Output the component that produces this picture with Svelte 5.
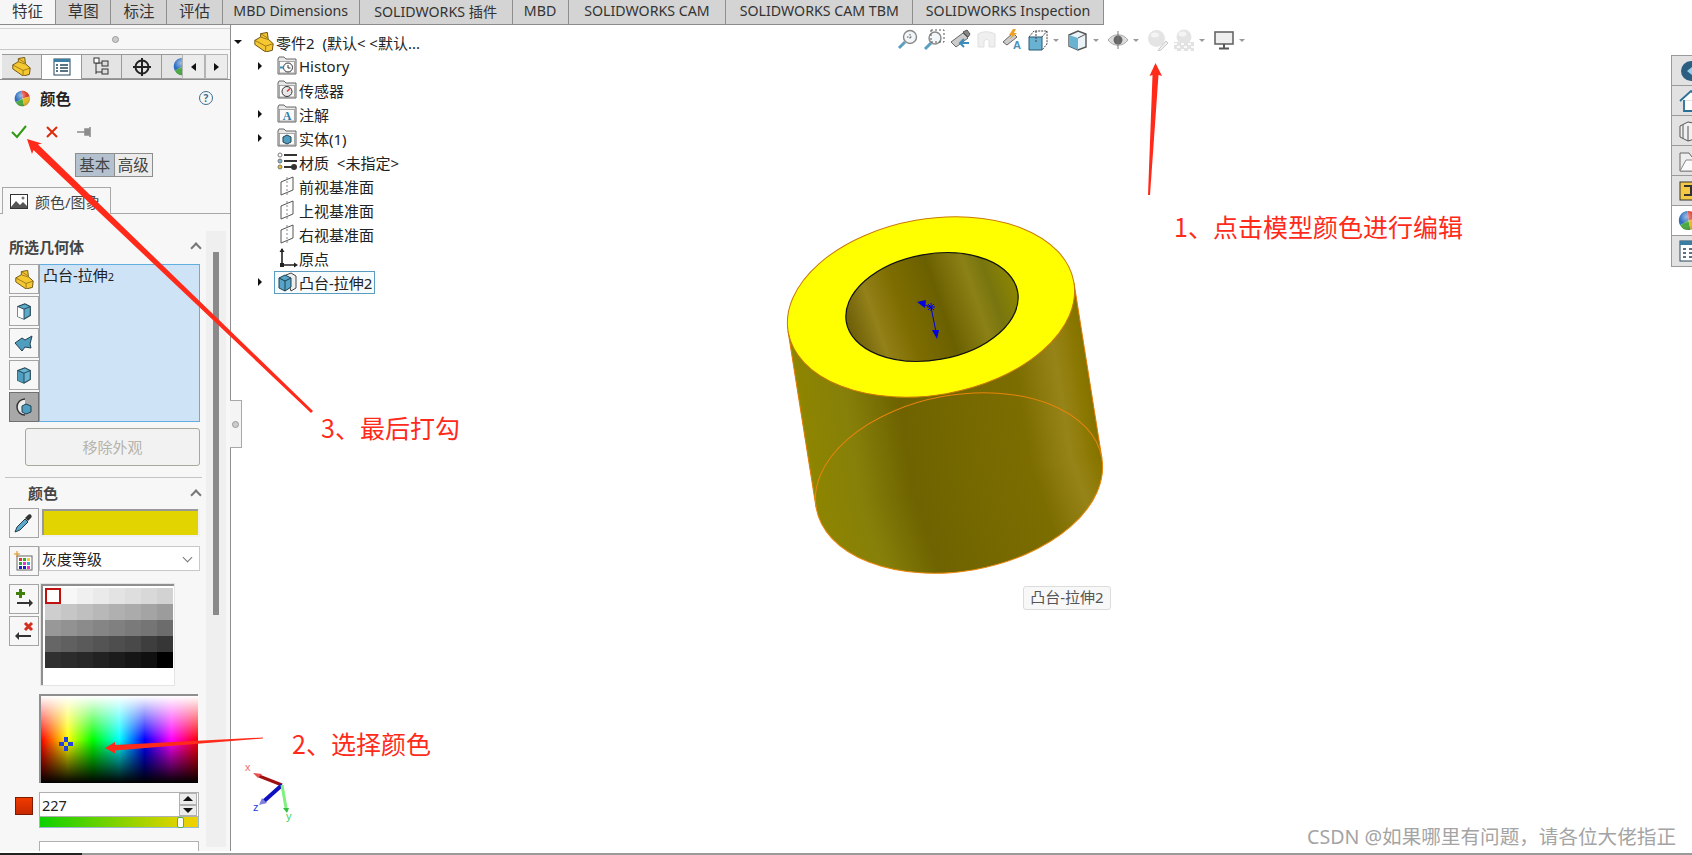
<script lang="ts">
  const topTabs = [
    { label: "特征", width: 56, active: true, cjk: true },
    { label: "草图", width: 55.5, cjk: true },
    { label: "标注", width: 56, cjk: true },
    { label: "评估", width: 55.5, cjk: true },
    { label: "MBD Dimensions", width: 137 },
    { label: "SOLIDWORKS 插件", width: 153 },
    { label: "MBD", width: 56 },
    { label: "SOLIDWORKS CAM", width: 158 },
    { label: "SOLIDWORKS CAM TBM", width: 187 },
    { label: "SOLIDWORKS Inspection", width: 191 },
  ];

  const grays = [
    "#fff", "#f7f7f7", "#f0f0f0", "#eaeaea", "#e3e3e3", "#dedede", "#d8d8d8", "#d2d2d2",
    "#cecece", "#c6c6c6", "#bfbfbf", "#b8b8b8", "#b0b0b0", "#ababab", "#a4a4a4", "#9c9c9c",
    "#989898", "#929292", "#8b8b8b", "#858585", "#808080", "#7a7a7a", "#757575", "#6c6c6c",
    "#666", "#606060", "#5a5a5a", "#545454", "#4e4e4e", "#494949", "#3e3e3e", "#363636",
    "#303030", "#2c2c2c", "#282828", "#222", "#1c1c1c", "#161616", "#101010", "#000",
  ];

  const tree = [
    { label: "History", kind: "history", arrow: true },
    { label: "传感器", kind: "sensor" },
    { label: "注解", kind: "note", arrow: true },
    { label: "实体(1)", kind: "solid", arrow: true },
    { label: "材质  <未指定>", kind: "material" },
    { label: "前视基准面", kind: "plane" },
    { label: "上视基准面", kind: "plane" },
    { label: "右视基准面", kind: "plane" },
    { label: "原点", kind: "origin" },
    { label: "凸台-拉伸2", kind: "boss", arrow: true, selected: true },
  ];
</script>

{#snippet part(size = 22)}
  <svg width={size} height={size} viewBox="0 0 24 24">
    <path d="M1 10l7-4V2l8-1.500 1 8 6 5.500-1 8-8 2L1 15z" fill="#f5c831" stroke="#6e5414" stroke-width="1.200" />
    <path d="M1 10l13 7v7M14 17l9-3M8 6l9 3M8 2l8 5" fill="none" stroke="#8a6a14" stroke-width="1" />
  </svg>
{/snippet}

{#snippet ball(size = 18)}
  <svg width={size} height={size} viewBox="0 0 20 20">
    <path d="M10 10L9 1a9 9 0 0 1 9.500 6.500z" fill="#d8382a" />
    <path d="M10 10L9 1a9 9 0 0 0-7 13.500z" fill="#2a6cc0" />
    <path d="M10 10L2 14.500a9 9 0 0 0 10 4.300z" fill="#45a83a" />
    <path d="M10 10l2 8.800a9 9 0 0 0 6.500-11.300z" fill="#e9b820" />
    <circle cx="10" cy="10" r="9" fill="url(#ballShade)" />
  </svg>
{/snippet}

{#snippet cube(size = 18, side = "#4f9dbf", front = "#69b4d2")}
  <svg width={size} height={size} viewBox="0 0 20 20">
    <path d="M3 5l8-3 6 3v10l-7 4-7-3z" fill={front} stroke="#20404f" stroke-width="1.200" />
    <path d="M3 5l7 3v11l-7-3z" fill={side} />
    <path d="M3 5l7 3 7-3M10 8v11" fill="none" stroke="#20404f" stroke-width="1" />
  </svg>
{/snippet}

{#snippet treeIcon(kind: string)}
  {#if kind === "plane"}
    <svg width="20" height="20" viewBox="0 0 20 20">
      <path d="M4 6l12-5v13L4 19z" fill="none" stroke="#555" stroke-width="1" />
      <path d="M10 1v18" stroke="#888" stroke-dasharray="2 2" />
    </svg>
  {:else if kind === "origin"}
    <svg width="22" height="20" viewBox="0 0 22 20">
      <path d="M5 1v16h14" fill="none" stroke="#222" stroke-width="1.600" />
      <path d="M2.500 4L5 0l2.500 4zM17 14.500l4 2.500-4 2.500z" fill="#222" />
      <rect x="3" y="15" width="4" height="4" fill="#222" />
    </svg>
  {:else if kind === "material"}
    <svg width="22" height="20" viewBox="0 0 22 20">
      <circle cx="3" cy="3" r="2" fill="#fff" stroke="#777" />
      <circle cx="3" cy="9" r="2" fill="#7db6d8" stroke="#777" />
      <circle cx="3" cy="15" r="2" fill="#f0c020" stroke="#777" />
      <path d="M7 3h13M7 9h13M7 15h8" stroke="#333" stroke-width="1.800" />
      <circle cx="17" cy="15" r="3" fill="#333" />
    </svg>
  {:else if kind === "boss"}
    <svg width="22" height="20" viewBox="0 0 22 20">
      <path d="M9 3l5-2 5 3v12l-5 3z" fill="#eee" stroke="#444" />
      <path d="M2 6l6-3 6 3v9l-6 4-6-3z" fill="#56a5c8" stroke="#1f3f50" />
      <path d="M2 6l6 3 6-3M8 9v10" fill="none" stroke="#1f3f50" />
    </svg>
  {:else}
    <svg width="20" height="20" viewBox="0 0 20 20">
      <path d="M1 3l1-2h5l2 2h10v15H1z" fill="#e8e8e8" stroke="#666" />
      <rect x="2.500" y="5.500" width="15" height="11.500" fill="#fafafa" stroke="#888" stroke-width=".7" />
      {#if kind === "history"}
        <circle cx="11" cy="11.500" r="4.500" fill="#fff" stroke="#333" />
        <path d="M11 9v3h2.500" fill="none" stroke="#333" />
        <path d="M3 11.500h4" stroke="#3a8db5" stroke-width="2" />
      {:else if kind === "sensor"}
        <circle cx="10" cy="11.500" r="5" fill="#e8e8e8" stroke="#333" />
        <path d="M10 11.500l3-3" stroke="#d33" stroke-width="1.500" />
      {:else if kind === "note"}
        <text x="10" y="16" font-size="12" font-weight="700" text-anchor="middle" fill="#2f7ba8" font-family="Liberation Serif, serif">A</text>
      {:else}
        <path d="M6 9l4-2 4 2v5l-4 2-4-2z" fill="#4f9dbf" stroke="#20404f" />
      {/if}
    </svg>
  {/if}
{/snippet}

<div class="app">
  <nav class="tabbar">
    {#each topTabs as tab}
      <div class="toptab" class:active={tab.active} class:cjk={tab.cjk} style={`width: ${tab.width}px`}>{tab.label}</div>
    {/each}
  </nav>

  <div class="workspace">
    <aside class="panel">
      <div class="grip"><span class="dot"></span></div>

      <div class="ptabs">
        <div class="ptab">{@render part(19)}</div>
        <div class="ptab on">
          <svg width="18" height="18" viewBox="0 0 18 18">
            <rect x="1" y="1" width="16" height="16" fill="#fff" stroke="#24465c" />
            <rect x="1" y="1" width="16" height="3" fill="#3a7ea3" />
            <path d="M3 7h2M7 7h8M3 10h2M7 10h8M3 13h2M7 13h8" stroke="#24465c" stroke-width="1.400" />
          </svg>
        </div>
        <div class="ptab">
          <svg width="18" height="20" viewBox="0 0 18 20">
            <path d="M3 2v15M3 6h6M3 15h6" stroke="#333" fill="none" />
            <rect x="1" y="1" width="5" height="5" fill="#fff" stroke="#333" />
            <rect x="9" y="4" width="6" height="5" fill="#ddd" stroke="#333" />
            <rect x="9" y="12" width="6" height="5" fill="#ddd" stroke="#333" />
          </svg>
        </div>
        <div class="ptab">
          <svg width="20" height="20" viewBox="0 0 20 20">
            <circle cx="10" cy="10" r="6.500" fill="none" stroke="#222" stroke-width="2" />
            <path d="M10 1v18M1 10h18" stroke="#222" stroke-width="2" />
          </svg>
        </div>
        <div class="ptab clip">{@render ball(19)}</div>
        <div class="pnav"><i class="tri left"></i></div>
        <div class="pnav"><i class="tri right"></i></div>
      </div>

      <div class="title">
        <span class="ball">{@render ball(17)}</span>
        <strong>颜色</strong>
        <span class="help">?</span>
      </div>

      <div class="actions">
        <svg width="16" height="14" viewBox="0 0 16 14"><path d="M1 7l5 5 9-11" fill="none" stroke="#2f9a12" stroke-width="2" /></svg>
        <svg class="cross" width="14" height="14" viewBox="0 0 14 14"><path d="M2 2l10 10M12 2L2 12" stroke="#dc2a0a" stroke-width="2" /></svg>
        <svg class="pin" width="16" height="12" viewBox="0 0 16 12"><path d="M0 6h8M8 3h5v6H8zM13 1v10" stroke="#8d8d8d" stroke-width="1.600" fill="#8d8d8d" /></svg>
      </div>

      <div class="mode">
        <span class="on">基本</span><span>高级</span>
      </div>

      <div class="subtab-row">
        <div class="subtab">
          <svg width="18" height="15" viewBox="0 0 18 15">
            <rect x=".5" y=".5" width="17" height="14" fill="#fff" stroke="#333" />
            <path d="M1 13l5-6 4 4 3-3 4 4v2H1z" fill="#555" />
            <circle cx="13" cy="4" r="1.500" fill="#777" />
          </svg>
          颜色/图象
        </div>
      </div>

      <div class="scrollarea">
        <div class="content">
          <div class="section-head first"><b>所选几何体</b><i class="chev"></i></div>
          <div class="geometry">
            <div class="side">
              <button class="ico">{@render part(19)}</button>
              <button class="ico">{@render cube(18, "#ffffff", "#5ca9ca")}</button>
              <button class="ico">
                <svg width="20" height="20" viewBox="0 0 20 20"><path d="M1 10l7-5 3 2 7-4-2 8 1 4-6-1-3 4z" fill="#4f9dbf" stroke="#20404f" /></svg>
              </button>
              <button class="ico">{@render cube(18)}</button>
              <button class="ico pressed">
                <svg width="20" height="20" viewBox="0 0 20 20">
                  <path d="M11 2a8 8 0 1 0 0 16" fill="#eee" stroke="#333" stroke-width="1.500" />
                  <path d="M8 9l4-2 5 2v6l-5 2-4-2z" fill="#4f9dbf" stroke="#20404f" />
                </svg>
              </button>
            </div>
            <div class="listbox">凸台-拉伸<small>2</small></div>
          </div>

          <button class="remove">移除外观</button>

          <div class="section-head color"><b>颜色</b><i class="chev"></i></div>

          <div class="row pick">
            <button class="ico">
              <svg width="20" height="20" viewBox="0 0 20 20">
                <path d="M1 19l2-5 8-8 3 3-8 8z" fill="#5ca9ca" stroke="#1f3f50" />
                <path d="M11 5l3-3c2-2 5 1 3 3l-3 3z" fill="#333" />
              </svg>
            </button>
            <div class="swatch"></div>
          </div>

          <div class="row scale">
            <button class="ico">
              <svg width="20" height="20" viewBox="0 0 20 20">
                <rect x="3" y="5" width="15" height="14" fill="#fff" stroke="#666" />
                <rect x="5" y="7" width="3" height="3" fill="#d33" /><rect x="9" y="7" width="3" height="3" fill="#3a3" /><rect x="13" y="7" width="3" height="3" fill="#ec3" />
                <rect x="5" y="11" width="3" height="3" fill="#3a3" /><rect x="9" y="11" width="3" height="3" fill="#e3c" /><rect x="13" y="11" width="3" height="3" fill="#3ad" />
                <rect x="5" y="15" width="3" height="3" fill="#22c" /><rect x="9" y="15" width="3" height="3" fill="#22c" /><rect x="13" y="15" width="3" height="3" fill="#e3c" />
                <path d="M3 0v6M0 3h6" stroke="#e08a10" />
              </svg>
            </button>
            <div class="select">灰度等级<i class="chev down"></i></div>
          </div>

          <div class="row palette-row">
            <div class="side two">
              <button class="ico">
                <svg width="20" height="20" viewBox="0 0 20 20">
                  <path d="M5 0h3v3h3v3H8v3H5V6H2V3h3z" fill="#3f7f0c" />
                  <path d="M3 14h13" stroke="#333" stroke-width="2" /><path d="M15 10l4 4-4 4z" fill="#333" />
                </svg>
              </button>
              <button class="ico">
                <svg width="20" height="20" viewBox="0 0 20 20">
                  <path d="M11 2l7 7M18 2l-7 7" stroke="#d33020" stroke-width="3" />
                  <path d="M4 15h13" stroke="#333" stroke-width="2" /><path d="M5 11l-4 4 4 4z" fill="#333" />
                </svg>
              </button>
            </div>
            <div class="palette">
              <div class="cells">
                {#each grays as g, i}
                  <span class:current={i === 0} style={`background: ${g}`}></span>
                {/each}
              </div>
            </div>
          </div>

          <div class="spectrum"><span class="cross-mark"></span></div>

          <div class="value-row">
            <span class="redchip"></span>
            <div class="field">
              <div class="input">
                <span>227</span>
                <div class="spin">
                  <span class="spin-btn"><i class="tri up"></i></span>
                  <span class="spin-btn"><i class="tri dn"></i></span>
                </div>
              </div>
              <div class="slider"><span class="thumb"></span></div>
            </div>
          </div>
          <div class="value-row next"><div class="field"><div class="input"></div></div></div>
        </div>
        <div class="track"><span></span></div>
      </div>
    </aside>

    <main class="canvas">
      <div class="handle"><span class="dot"></span></div>

      <ul class="tree">
        <li class="root">
          <i class="tri dn small"></i>
          <span class="root-icon">{@render part(20)}</span>
          <span class="label">零件2  (默认&lt; &lt;默认...</span>
        </li>
        {#each tree as node}
          <li>
            <span class="twist">{#if node.arrow}<i class="tri right small"></i>{/if}</span>
            <span class="node" class:selected={node.selected}>
              <span class="node-icon">{@render treeIcon(node.kind)}</span>
              <span class="label">{node.label}</span>
            </span>
          </li>
        {/each}
      </ul>

      <div class="headsup">
        <svg width="22" height="22" viewBox="0 0 22 22">
          <circle cx="13" cy="8" r="6.500" fill="#f2f6f8" stroke="#888" stroke-width="1.400" />
          <path d="M8 13l-6 6" stroke="#5a9fc0" stroke-width="3" />
          <path d="M13 5v6M10 8h6" stroke="#555" stroke-dasharray="1.500 1.500" />
        </svg>
        <svg width="22" height="22" viewBox="0 0 22 22">
          <circle cx="12" cy="9" r="6" fill="#f2f6f8" stroke="#888" stroke-width="1.400" />
          <path d="M8 14l-6 6" stroke="#5a9fc0" stroke-width="3" />
          <rect x="8" y="1" width="13" height="12" fill="none" stroke="#555" stroke-dasharray="2 2" />
        </svg>
        <svg width="22" height="22" viewBox="0 0 22 22">
          <path d="M2 13l12-9 5 5-12 9z" fill="#ccc" stroke="#666" />
          <path d="M14 3l4-2 3 4-2 3z" fill="#888" stroke="#555" />
          <path d="M20 14h-9M15 10l-4 4 4 4" fill="none" stroke="#3c8dbb" stroke-width="2" />
        </svg>
        <svg width="22" height="22" viewBox="0 0 22 22" opacity=".45">
          <path d="M3 5c5-3 11-3 17 0v13h-6v-6c-1-2-3-2-5 0v6H3z" fill="#ddd" stroke="#bbb" />
        </svg>
        <svg width="22" height="22" viewBox="0 0 22 22">
          <path d="M2 13L12 4l4 4-10 8z" fill="#ccc" stroke="#666" />
          <path d="M12 0L8 6h3l-2 4 7-6h-3l2-4z" fill="#f0a020" />
          <text x="16" y="20" font-size="11" font-weight="700" text-anchor="middle" fill="#4a90b8" font-family="Liberation Sans, sans-serif">A</text>
        </svg>
        <span class="drop">
          <svg width="22" height="22" viewBox="0 0 22 22">
            <path d="M2 8h13v13H2z" fill="#6ab2d2" stroke="#2a5a72" />
            <path d="M2 8l5-6h13v13l-5 6M15 8l5-6M9 2v11" fill="none" stroke="#444" stroke-dasharray="2 1" />
          </svg>
          <i class="caret"></i>
        </span>
        <span class="drop">
          <svg width="22" height="22" viewBox="0 0 22 22">
            <path d="M2 6l9-4 8 3v13l-8 3-9-4z" fill="#e9f3f8" stroke="#555" stroke-width="1.400" />
            <path d="M2 6l9 3v12l-9-4z" fill="#6ab2d2" />
            <path d="M11 9l8-4" stroke="#555" />
          </svg>
          <i class="caret"></i>
        </span>
        <span class="drop">
          <svg width="22" height="22" viewBox="0 0 22 22">
            <path d="M1 11c5-7 15-7 20 0-5 7-15 7-20 0z" fill="#ddd" stroke="#aaa" />
            <circle cx="11" cy="11" r="4.500" fill="#666" />
            <path d="M11 2v18" stroke="#777" />
          </svg>
          <i class="caret"></i>
        </span>
        <span class="drop">
          <span class="twin">
            <svg width="22" height="22" viewBox="0 0 22 22">
              <circle cx="9.500" cy="9.500" r="8.500" fill="#e4e4e4" />
              <ellipse cx="8" cy="6" rx="4" ry="2.500" fill="#f4f4f4" />
              <path d="M12 20l7-8 2 2-7 7-3 1z" fill="#f0f0f0" stroke="#c9c9c9" />
            </svg>
            <svg width="22" height="22" viewBox="0 0 22 22">
              <circle cx="11" cy="8" r="7.500" fill="#e4e4e4" />
              <ellipse cx="9.500" cy="5" rx="4" ry="2.500" fill="#f4f4f4" />
              <rect x="1" y="13" width="20" height="9" fill="#e2e2e2" />
              <path d="M1 21h3M8 21h3M15 21h3M4 18h3M11 18h3M18 18h3M1 15h3M8 15h3M15 15h3" stroke="#fafafa" stroke-width="2" />
            </svg>
          </span>
          <i class="caret"></i>
        </span>
        <span class="drop">
          <svg width="22" height="22" viewBox="0 0 22 22">
            <rect x="2" y="3" width="18" height="12" fill="#eee" stroke="#666" stroke-width="1.600" />
            <path d="M11 15v4M6 19.500h10" stroke="#555" stroke-width="2" />
          </svg>
          <i class="caret"></i>
        </span>
      </div>

      <svg class="model" width="1462" height="830" viewBox="230 25 1462 830">
        <defs>
          <radialGradient id="ballShade" cx=".4" cy=".3" r=".8">
            <stop offset="0" stop-color="#fff" stop-opacity=".55" />
            <stop offset=".5" stop-color="#fff" stop-opacity="0" />
            <stop offset="1" stop-color="#000" stop-opacity=".35" />
          </radialGradient>
          <linearGradient id="sideShade" gradientUnits="userSpaceOnUse" x1="788" y1="400" x2="1101" y2="350">
            <stop offset="0" stop-color="#a89e00" />
            <stop offset=".04" stop-color="#8d8400" />
            <stop offset=".18" stop-color="#86800a" />
            <stop offset=".34" stop-color="#6e6300" />
            <stop offset=".55" stop-color="#766900" />
            <stop offset=".72" stop-color="#7c6d00" />
            <stop offset=".85" stop-color="#978419" />
            <stop offset=".92" stop-color="#8a7700" />
            <stop offset="1" stop-color="#786900" />
          </linearGradient>
          <linearGradient id="holeShade" gradientUnits="userSpaceOnUse" x1="844" y1="320" x2="1018" y2="292">
            <stop offset="0" stop-color="#6a5c08" />
            <stop offset=".17" stop-color="#938119" />
            <stop offset=".33" stop-color="#7e6d00" />
            <stop offset=".55" stop-color="#6b6000" />
            <stop offset=".75" stop-color="#8b8116" />
            <stop offset=".85" stop-color="#78750f" />
            <stop offset="1" stop-color="#8e8800" />
          </linearGradient>
        </defs>
        <ellipse cx="958" cy="483" rx="145" ry="88" transform="rotate(-10 958 483)" fill="url(#sideShade)" />
        <path d="M787 331 L815 507 L1101 459 L1073 283 Z" fill="url(#sideShade)" />
        <path d="M787 331 L815 507 M1073 283 L1101 459" fill="none" stroke="#e07a00" stroke-width="1" />
        <ellipse cx="958" cy="483" rx="145" ry="88" transform="rotate(-10 958 483)" fill="none" stroke="#e8850a" stroke-width="1" />
        <ellipse cx="930" cy="307" rx="145" ry="88" transform="rotate(-10 930 307)" fill="#ffff00" stroke="#c8780a" stroke-width="1" />
        <ellipse cx="931" cy="307" rx="87" ry="53" transform="rotate(-10 931 307)" fill="url(#holeShade)" stroke="#111" stroke-width="1.200" />
        <g stroke="#0000e0" fill="#0000e0" stroke-width="1">
          <path d="M930 307 L935 332 M930 307 L921 304" fill="none" />
          <path d="M925 300l-9 2 8 6zM931 330l7 0-2 9z" stroke="none" />
          <path d="M926 307h8M930 303v8M927 304l6 6M933 304l-6 6" fill="none" />
        </g>
        <g stroke-width="3">
          <path d="M281 785L258 776" stroke="#a01010" />
          <path d="M252 773l9 1-4 4z" fill="#e85050" />
          <path d="M281 785L262 802" stroke="#1010c0" stroke-width="4" />
          <path d="M258 805l3-7 5 5z" fill="#8080e0" />
          <path d="M281 785L285 808" stroke="#80f080" />
          <path d="M282 808h6l-2 5z" fill="#30c040" />
        </g>
        <text x="244" y="771" class="axis" fill="#f07070">x</text>
        <text x="252" y="811" class="axis" fill="#2040e0">z</text>
        <text x="285" y="820" class="axis" fill="#40d060">y</text>
      </svg>

      <div class="tooltip">凸台-拉伸2</div>

      <div class="rail">
        <div class="rail-btn">
          <svg width="26" height="22" viewBox="0 0 26 22"><circle cx="13" cy="11" r="10" fill="#2a5f82" /><path d="M9 11l5-4v8z" fill="#9fd0ea" /></svg>
        </div>
        <div class="rail-btn">
          <svg width="26" height="22" viewBox="0 0 26 22"><path d="M2 11L13 1l11 10M6 10v11h14V10" fill="#fff" stroke="#2a6f95" stroke-width="1.800" /></svg>
        </div>
        <div class="rail-btn">
          <svg width="26" height="22" viewBox="0 0 26 22"><path d="M2 6l8-4 10 2v14l-10 3-8-4zM10 6v15M5 5v13" fill="#f0f0f0" stroke="#555" /></svg>
        </div>
        <div class="rail-btn">
          <svg width="26" height="22" viewBox="0 0 26 22"><path d="M2 3h9l3 4h12v14H2z" fill="#eee" stroke="#666" /><path d="M2 21l6-11h18v11z" fill="#fafafa" stroke="#888" /></svg>
        </div>
        <div class="rail-btn">
          <svg width="26" height="22" viewBox="0 0 26 22"><rect x="2" y="2" width="24" height="18" fill="#f4c842" stroke="#333" /><path d="M6 6h14M13 6v9M6 15h14" stroke="#333" stroke-width="2" /></svg>
        </div>
        <div class="rail-btn on">{@render ball(21)}</div>
        <div class="rail-btn">
          <svg width="26" height="22" viewBox="0 0 26 22"><rect x="2" y="1" width="24" height="20" fill="#fff" stroke="#24465c" /><rect x="2" y="1" width="24" height="4" fill="#3a7ea3" /><path d="M5 9h3M11 9h12M5 13h3M11 13h12M5 17h3M11 17h12" stroke="#24465c" stroke-width="1.500" /></svg>
        </div>
      </div>

      <div class="note note-1">1、点击模型颜色进行编辑</div>
      <div class="note note-2">2、选择颜色</div>
      <div class="note note-3">3、最后打勾</div>
      <div class="watermark">CSDN @如果哪里有问题，请各位大佬指正</div>
    </main>

    <svg class="arrows" width="1692" height="855" viewBox="0 0 1692 855">
      <path d="M1148 195 L1152.500 75 L1149.500 76 L1155.500 63 L1162 76 L1158.500 75 L1150 195 Z" fill="#ff2a1a" />
      <path d="M263 737.500 L115 745 L115 742 L105 748 L115 753.500 L115 750.500 L263 738.500 Z" fill="#ff2a1a" />
      <path d="M313 411 L38 144.500 L42 143.500 L27 139 L32 154 L33.500 150 L311 413 Z" fill="#ff2a1a" />
    </svg>
  </div>

  <div class="statusbar"><span></span></div>
</div>

<style>
  :global(body) {
    margin: 0;
    background: #fff;
  }

  .app {
    position: relative;
    width: 1692px;
    height: 855px;
    overflow: hidden;
    font-family: "Noto Sans", "Noto Sans CJK SC", sans-serif;
    color: #222;
    font-size: 15px;
  }

  .tabbar {
    display: flex;
    width: 1104px;
    height: 24px;
    background: #d4d4d4;
    border-bottom: 1px solid #8a8a8a;
  }

  .toptab {
    box-sizing: border-box;
    display: flex;
    align-items: center;
    justify-content: center;
    height: 24px;
    padding-bottom: 3px;
    border-right: 1px solid #8e8e8e;
    font-size: 14.200px;
    color: #333;
    white-space: nowrap;
  }

  .toptab.cjk {
    font-size: 15.500px;
  }

  .toptab.active {
    background: #f6f6f6;
  }

  .workspace {
    display: flex;
    height: 826px;
  }

  .panel {
    box-sizing: border-box;
    flex: 0 0 231px;
    height: 826px;
    background: #f7f7f7;
    border-right: 1px solid #8f8f8f;
    overflow: hidden;
  }

  .grip {
    display: flex;
    justify-content: center;
    align-items: center;
    height: 20px;
    margin-top: 3px;
    border-top: 1px solid #d4d4d4;
    border-bottom: 1px solid #c8c8c8;
  }

  .dot {
    display: block;
    width: 5px;
    height: 5px;
    border-radius: 50%;
    background: #ccc;
    border: 1px solid #999;
  }

  .ptabs {
    display: flex;
    height: 25px;
    margin-top: 4px;
    padding-left: 2px;
    border-bottom: 1px solid #8f8f8f;
    overflow: hidden;
  }

  .ptab {
    box-sizing: border-box;
    display: flex;
    align-items: center;
    justify-content: center;
    width: 40px;
    background: #e4e4e4;
    border: 1px solid #9a9a9a;
    border-left: 0;
  }

  .ptab.on {
    background: #fff;
    height: 26px;
  }

  .ptab.clip {
    width: 20px;
    justify-content: flex-start;
    padding-left: 11px;
    overflow: hidden;
    border-right: 0;
  }

  .ptab.clip svg {
    flex: none;
  }

  .pnav {
    box-sizing: border-box;
    display: flex;
    align-items: center;
    justify-content: center;
    width: 23px;
    background: #ececec;
    border: 1px solid #b4b4b4;
  }

  .tri {
    display: block;
    width: 0;
    height: 0;
    border-style: solid;
    border-color: transparent;
  }

  .tri.left {
    border-width: 4px 5px 4px 0;
    border-right-color: #111;
  }

  .tri.right {
    border-width: 4px 0 4px 5px;
    border-left-color: #111;
  }

  .tri.up {
    border-width: 0 5px 5px;
    border-bottom-color: #111;
  }

  .tri.dn {
    border-width: 5px 5px 0;
    border-top-color: #111;
  }

  .title {
    display: flex;
    align-items: center;
    height: 26px;
    margin-top: 5px;
    padding: 0 17px 0 14px;
    font-size: 15.500px;
  }

  .ball {
    display: flex;
  }

  .title strong {
    margin-left: 9px;
    color: #222;
  }

  .help {
    margin-left: auto;
    width: 12px;
    height: 12px;
    line-height: 12px;
    text-align: center;
    border: 1px solid #3c6f90;
    border-radius: 50%;
    font-size: 10px;
    font-weight: 700;
    color: #3c6f90;
  }

  .actions {
    display: flex;
    align-items: center;
    height: 20px;
    margin-top: 11px;
    padding-left: 11px;
  }

  .cross {
    margin-left: 18px;
  }

  .pin {
    margin-left: 18px;
  }

  .mode {
    display: flex;
    width: 78px;
    height: 24px;
    margin: 11px 0 0 75px;
    font-size: 15.500px;
    color: #444;
    border: 1px solid #8e8e8e;
    box-sizing: border-box;
  }

  .mode span {
    flex: 1;
    text-align: center;
    line-height: 22px;
    background: #ececec;
  }

  .mode .on {
    background: #b4c2d0;
    border-right: 1px solid #8e8e8e;
  }

  .subtab-row {
    height: 26px;
    margin-top: 10px;
    border-bottom: 1px solid #a8a8a8;
  }

  .subtab {
    box-sizing: border-box;
    display: flex;
    align-items: center;
    gap: 7px;
    width: 109px;
    height: 27px;
    margin-left: 2px;
    padding-left: 7px;
    border: 1px solid #a8a8a8;
    border-bottom: 0;
    font-size: 15px;
    color: #444;
    background: #f7f7f7;
  }

  .scrollarea {
    position: relative;
    display: flex;
  }

  .content {
    width: 206px;
    flex: none;
  }

  .track {
    width: 20px;
    height: 616px;
    margin-top: 17px;
    background: #efefef;
    display: flex;
    justify-content: center;
    flex: none;
    padding-top: 21px;
    box-sizing: border-box;
  }

  .track span {
    display: block;
    width: 6px;
    height: 363px;
    background: #8a8a8a;
  }

  .section-head {
    display: flex;
    align-items: center;
    justify-content: space-between;
    height: 20px;
    padding: 0 6px 0 9px;
    font-size: 15px;
    color: #444;
  }

  .section-head.first {
    margin-top: 22px;
  }

  .section-head.color {
    box-sizing: border-box;
    margin: 11px 4px 0 5px;
    height: 28px;
    padding: 2px 2px 0 23px;
    border-top: 1px solid #c4c4c4;
  }

  .chev {
    display: block;
    width: 6px;
    height: 6px;
    margin-top: 4px;
    border: solid #777;
    border-width: 2px 0 0 2px;
    transform: rotate(45deg);
  }

  .chev.down {
    margin: -3px 2px 0 auto;
    border-width: 0 1.500px 1.500px 0;
  }

  .geometry {
    display: flex;
    margin: 8px 0 0 9px;
  }

  .side {
    display: flex;
    flex-direction: column;
    gap: 2px;
  }

  .ico {
    box-sizing: border-box;
    display: flex;
    align-items: center;
    justify-content: center;
    width: 30px;
    height: 30px;
    padding: 0;
    background: #f7f7f7;
    border: 1px solid #a4a4a4;
  }

  .ico.pressed {
    background: #a8a8a8;
    border-color: #707070;
  }

  .listbox {
    box-sizing: border-box;
    width: 161px;
    height: 158px;
    padding: 0 0 0 3px;
    background: #cfe3f6;
    border: 1px solid #62aee0;
    line-height: 20px;
    font-size: 15px;
  }

  .listbox small {
    font-size: 11px;
  }

  .remove {
    display: block;
    box-sizing: border-box;
    width: 175px;
    height: 38px;
    margin: 6px 0 0 25px;
    padding: 0 0 2px;
    background: #f2f2f2;
    border: 1px solid #a8a89c;
    border-radius: 3px;
    font: inherit;
    font-size: 15px;
    color: #b4b4ac;
  }

  .row {
    display: flex;
    margin-left: 9px;
  }

  .pick {
    margin-top: 3px;
  }

  .swatch {
    box-sizing: border-box;
    width: 160px;
    height: 28px;
    background: #e2d400;
    border: 2px solid #f0f0f0;
    border-width: 0 2px 2px 2px;
    box-shadow: inset 0 2px 0 #999, inset 2px 0 0 #999;
    margin: 1px 0 0 1px;
  }

  .scale {
    margin-top: 8px;
  }

  .select {
    box-sizing: border-box;
    display: flex;
    align-items: center;
    width: 161px;
    height: 25px;
    padding: 0 6px 0 2px;
    background: #fff;
    border: 1px solid #c8c8c8;
    font-size: 15px;
  }

  .palette-row {
    margin-top: 8px;
    gap: 2px;
  }

  .side.two {
    gap: 2px;
  }

  .palette {
    box-sizing: border-box;
    width: 133px;
    height: 101px;
    background: #fff;
    padding: 2px 0 0 2px;
    border: solid #8f8f8f;
    border-width: 2px 0 0 2px;
    outline: 1px solid #e4e4e4;
  }

  .cells {
    display: grid;
    grid-template-columns: repeat(8, 16px);
    grid-auto-rows: 16px;
  }

  .cells span.current {
    box-sizing: border-box;
    border: 2px solid #c01010;
  }

  .spectrum {
    position: relative;
    box-sizing: border-box;
    width: 159px;
    height: 89px;
    margin: 9px 0 0 39px;
    border: solid #8f8f8f;
    border-width: 2px 0 0 2px;
    background:
      linear-gradient(to bottom, #fff 0%, rgba(255, 255, 255, 0) 50%, rgba(0, 0, 0, 0) 50%, #000 100%),
      linear-gradient(to right, #f00 0%, #ff0 17%, #0f0 33%, #0ff 50%, #00f 66%, #f0f 83%, #f00 100%);
  }

  .cross-mark {
    position: absolute;
    left: 18px;
    top: 41px;
    width: 14px;
    height: 14px;
    background:
      linear-gradient(#e8d800, #e8d800) center / 4px 4px no-repeat,
      linear-gradient(#2040e0, #2040e0) center / 14px 4px no-repeat,
      linear-gradient(#2040e0, #2040e0) center / 4px 14px no-repeat;
  }

  .value-row {
    display: flex;
    align-items: flex-start;
    margin-top: 9px;
    padding-left: 15px;
  }

  .redchip {
    box-sizing: border-box;
    width: 18px;
    height: 18px;
    margin-top: 5px;
    background: linear-gradient(#f03a00, #c82800);
    border: 1px solid #7a1a00;
  }

  .field {
    margin-left: 6px;
    width: 160px;
  }

  .value-row.next {
    margin-top: 13px;
  }

  .value-row.next .field {
    margin-left: 24px;
  }

  .input {
    box-sizing: border-box;
    display: flex;
    align-items: center;
    justify-content: space-between;
    height: 25px;
    padding-left: 2px;
    background: #fff;
    border: 1px solid #b0b0b0;
    font-size: 14.500px;
  }

  .spin {
    display: flex;
    flex-direction: column;
    width: 18px;
    height: 23px;
    margin-right: 1px;
  }

  .spin-btn {
    box-sizing: border-box;
    display: flex;
    align-items: center;
    justify-content: center;
    flex: 1;
    background: #ececec;
    border: 1px solid #b0b0b0;
  }

  .slider {
    position: relative;
    height: 10px;
    background: linear-gradient(to right, #0fd000, #e2d400 90%, #f0d000);
    border: solid #9ab8d0;
    border-width: 0 1px 1px 1px;
  }

  .thumb {
    position: absolute;
    left: 137px;
    top: 0;
    width: 5px;
    height: 9px;
    background: #fff;
    border: 1px solid #4caf50;
    border-radius: 2px;
  }

  .canvas {
    position: relative;
    flex: 1;
    height: 826px;
  }

  .handle {
    position: absolute;
    left: -1px;
    top: 375px;
    box-sizing: border-box;
    display: flex;
    align-items: center;
    justify-content: center;
    width: 12px;
    height: 48px;
    background: #f4f4f4;
    border: 1px solid #a8a8a8;
    border-left: 0;
  }

  .tree {
    position: relative;
    z-index: 1;
    list-style: none;
    margin: 0;
    padding: 5px 0 0 3px;
    font-size: 15px;
    color: #222;
  }

  .tree li {
    display: flex;
    align-items: center;
    height: 24px;
    padding-left: 24px;
  }

  .tree li.root {
    padding-left: 0;
  }

  .tri.small {
    border-width: 4px 0 4px 4px;
  }

  .tri.dn.small {
    border-width: 4px 4px 0;
    margin-left: 0;
  }

  .root-icon {
    display: flex;
    margin: 0 2px 0 12px;
  }

  .twist {
    display: flex;
    width: 19px;
  }

  .node {
    box-sizing: border-box;
    display: flex;
    align-items: center;
  }

  .node-icon {
    display: flex;
    width: 22px;
  }

  .label {
    white-space: pre;
  }

  .node.selected {
    height: 23px;
    margin-left: -3px;
    padding: 0 2px;
    background: #f6fbfe;
    border: 1px solid #5b9bc0;
  }

  .headsup {
    position: absolute;
    z-index: 1;
    top: 4px;
    left: 666px;
    display: flex;
    align-items: center;
    gap: 4px;
  }

  .drop {
    display: flex;
    align-items: center;
    gap: 4px;
  }

  .twin {
    display: flex;
    gap: 4px;
  }

  .caret {
    display: block;
    width: 0;
    height: 0;
    border: solid transparent;
    border-width: 3px 3px 0;
    border-top-color: #999;
    margin-right: 4px;
  }

  .model {
    position: absolute;
    left: 0;
    top: 0;
    pointer-events: none;
  }

  .axis {
    font-size: 11px;
    font-family: "Liberation Sans", sans-serif;
  }

  .tooltip {
    position: absolute;
    left: 792px;
    top: 561px;
    box-sizing: border-box;
    width: 88px;
    height: 24px;
    line-height: 21px;
    text-align: center;
    background: #f8f8f8;
    border: 1px solid #dcdcdc;
    border-radius: 3px;
    font-size: 15px;
    color: #555;
  }

  .rail {
    position: absolute;
    right: 0;
    top: 30px;
    width: 20px;
    overflow: hidden;
    border: solid #9a9a9a;
    border-width: 1px 0 1px 1px;
  }

  .rail-btn {
    display: flex;
    align-items: center;
    justify-content: flex-start;
    box-sizing: border-box;
    width: 34px;
    height: 30px;
    padding-left: 6px;
    background: #e2e2e2;
    border-bottom: 1px solid #9a9a9a;
  }

  .rail-btn:last-child {
    border-bottom: 0;
  }

  .rail-btn.on {
    background: #fff;
  }

  .note {
    position: absolute;
    z-index: 2;
    font-family: "Noto Sans CJK SC", sans-serif;
    font-size: 25px;
    line-height: 30px;
    color: #ff2a1a;
    white-space: nowrap;
  }

  .note-1 {
    left: 943px;
    top: 186px;
  }

  .note-2 {
    left: 61px;
    top: 703px;
  }

  .note-3 {
    left: 90px;
    top: 387px;
  }

  .watermark {
    position: absolute;
    z-index: 2;
    right: 16px;
    top: 796px;
    font-family: "Noto Sans", "Noto Sans CJK SC", sans-serif;
    font-size: 19.600px;
    color: #a4a4a4;
    white-space: nowrap;
  }

  .arrows {
    position: absolute;
    left: 0;
    top: 0;
    z-index: 3;
    pointer-events: none;
  }

  .statusbar {
    position: absolute;
    left: 0;
    right: 0;
    bottom: 0;
    height: 2px;
    background: #9a9a9a;
  }

  .statusbar span {
    display: block;
    width: 82px;
    height: 2px;
    background: #222;
  }
</style>
